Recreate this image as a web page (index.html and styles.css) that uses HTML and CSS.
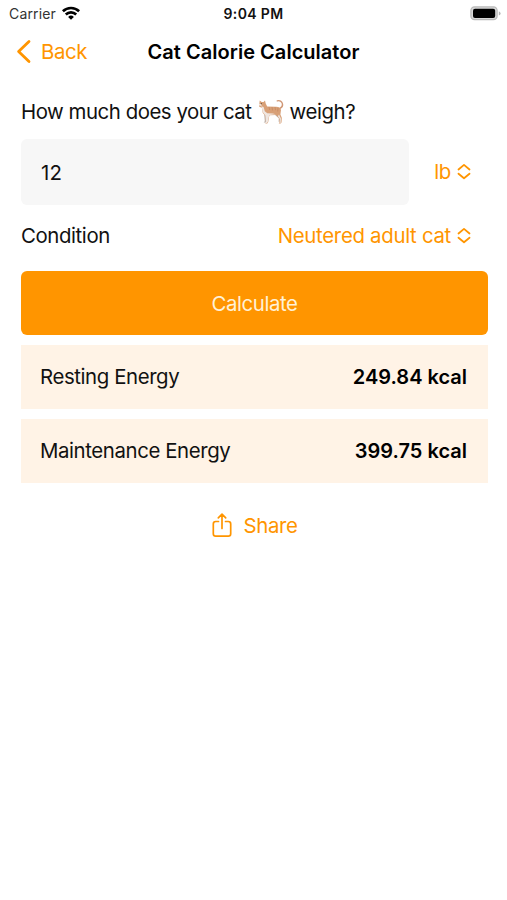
FILE: index.html
```html
<!DOCTYPE html>
<html lang="en">
<head>
<meta charset="utf-8">
<title>Cat Calorie Calculator</title>
<link rel="stylesheet" href="styles.css">
</head>
<body>
<div class="status">
  <div class="carrier"><span class="carrier-name">Carrier</span>
    <svg class="wifi" viewBox="0 0 18 14" width="18" height="14" fill="none" stroke="#000" stroke-width="2.6"><path d="M.9 5.3a11.6 11.6 0 0 1 16.2 0M3.8 8.5a7.4 7.4 0 0 1 10.4 0"/><path d="M9 13.8 6.1 11a4.2 4.2 0 0 1 5.8 0z" fill="#000" stroke="none"/></svg>
  </div>
  <span class="time">9:04 PM</span>
  <svg class="battery" viewBox="0 0 31 15" width="31" height="15"><rect x=".9" y=".9" width="26.2" height="12.8" rx="3.6" fill="#d8d8d8" stroke="#b9b9b9" stroke-width="1.3"/><rect x="3" y="2.7" width="22.2" height="9.2" rx="2" fill="#000"/><path d="M28.8 5.2q1.8.7 1.8 2.2t-1.8 2.2z" fill="#b5b5b5"/></svg>
</div>
<header class="nav">
  <a class="back"><svg viewBox="0 0 15 24" width="15" height="24" fill="none" stroke="currentColor" stroke-width="2.8" stroke-linecap="round" stroke-linejoin="round"><path d="M13 1.5 2.6 11.5 13 21.5"/></svg><span>Back</span></a>
  <h1>Cat Calorie Calculator</h1>
</header>
<main>
  <label class="question"><span class="ask">How much does your cat</span>
    <svg class="cat" viewBox="0 0 26 26" width="26" height="26"><path d="M22 9.3c1.6-.8 2.9-2 2.5-4.3C24 2.3 21.6 1 19.3 1.9" fill="none" stroke="#cf9674" stroke-width="1.4" stroke-linecap="round"/><path d="m6.2 15 .6 7.3-1.1 1.2h2.2l1.3-7zM19.5 15l3 3.5-.3 4.3h-1.6l.2-3.6-3.5-3z" fill="#b9afa9"/><path d="m1.7 1.5 2 1.4h1.8L7 1.6l.7 3 1.5 2.9 8 .2q5.3-.4 5.8 3.4l-.6 4.4 1.4 3.3-.3 4.6-.9 1.2h-1.8l.6-1.5-.2-3.6-3-3.4-6.8.1-1.2 6.9-1 1.5H7.4l.5-1.6-.5-6-2.7-3.3-.8-5-2.7-1 .1-2.2z" fill="#d8a077"/><path d="m3.3 7.2 2.3.7 1.2 4.3 2.5 2 5.5.4 3 .7-6.6.8-1.2 6.5-1 1.4H7.4l.5-1.6-.5-6-2.7-3.3-.9-4.7z" fill="#efe6e0"/><path d="m21 15.5 2 4-.3 4.5h-1.2l.3-4-2-2.7z" fill="#ece1d9"/><path d="m11 8 .7 3M14 8l.5 3.4M17 8l.5 3.2M20 9l-.3 3.5" stroke="#bf8259" stroke-width=".6" fill="none"/><path d="M1 6.3V5l1.5-.2 1.3 1.4-.6.8z" fill="#f1e7e0"/><circle cx="3.3" cy="4.6" r=".6" fill="#57483d"/></svg>
    <span class="weigh">weigh?</span></label>
  <div class="weight">
    <div class="field"><span>12</span></div>
    <div class="picker"><span class="unit">lb</span><svg class="updown" viewBox="0 0 14 16" width="14" height="16"><path d="m1.5 5.5 5.5-4.6 5.5 4.6M1.5 9.7l5.5 4.6 5.5-4.6"/></svg></div>
  </div>
  <div class="condition">
    <span class="cond-label">Condition</span>
    <div class="picker"><span class="cond-value">Neutered adult cat</span><svg class="updown" viewBox="0 0 14 16" width="14" height="16"><path d="m1.5 5.5 5.5-4.6 5.5 4.6M1.5 9.7l5.5 4.6 5.5-4.6"/></svg></div>
  </div>
  <button class="calculate"><span>Calculate</span></button>
  <div class="result"><span class="resting">Resting Energy</span><strong>249.84 kcal</strong></div>
  <div class="result"><span class="maintenance">Maintenance Energy</span><strong>399.75 kcal</strong></div>
  <a class="share"><svg viewBox="0 0 20 26" width="20" height="26" fill="none" stroke="currentColor" stroke-width="1.7" stroke-linecap="round" stroke-linejoin="round"><path d="M6.5 8.5H3.7Q1.3 8.5 1.3 10.9v9.8q0 2.4 2.4 2.4h12.6q2.4 0 2.4-2.4v-9.8q0-2.4-2.4-2.4h-2.8M10 15.5V1.3M6.3 4.8 10 1.1l3.7 3.7"/></svg><span>Share</span></a>
</main>
</body>
</html>
```
FILE: styles.css
```css
* { box-sizing: border-box; }
body {
  margin: 0;
  min-height: 900px;
  background: #fff;
  color: #111;
  font: 20.4px/26px Inter, "Liberation Sans", sans-serif;
  letter-spacing: -.4px;
  white-space: nowrap;
}
svg { display: block; flex: none; overflow: visible; }
.status {
  display: grid;
  grid-template-columns: 1fr auto 1fr;
  align-items: center;
  height: 27px;
  padding: 0 6px 0 9px;
  font-size: 14px;
  line-height: 18px;
  letter-spacing: 0;
}
.carrier { display: flex; align-items: center; gap: 6px; color: #333; }
.carrier-name { letter-spacing: .15px; }
.wifi { margin-top: -2px; }
.time { margin-right: 3px; color: #111; font-weight: 600; letter-spacing: .35px; }
.battery { justify-self: end; }
.nav {
  display: grid;
  grid-template-columns: 1fr auto 1fr;
  align-items: center;
  height: 50px;
  padding: 0 16px;
}
.back { display: flex; align-items: center; gap: 10px; color: #ff9500; }
h1 { margin: 0; font-size: 20px; line-height: 26px; font-weight: 600; letter-spacing: .03px; color: #000; }
main { padding: 22px 19px 0 21px; }
.question { display: flex; align-items: center; height: 26px; }
.ask { letter-spacing: -.46px; }
.cat { margin: 0 6px; }
.weight { display: flex; justify-content: space-between; align-items: center; margin-top: 14px; padding-right: 17px; }
.field {
  display: flex;
  align-items: center;
  width: 388px;
  height: 66px;
  padding: 1px 0 0 20px;
  border-radius: 6px;
  background: #f7f7f7;
  letter-spacing: .2px;
}
.picker { display: flex; align-items: center; gap: 6px; color: #ff9500; letter-spacing: -.3px; }
.updown { fill: none; stroke: currentColor; stroke-width: 1.8; stroke-linecap: round; stroke-linejoin: round; }
.condition { display: flex; justify-content: space-between; align-items: center; height: 62px; padding-right: 17px; }
.calculate {
  display: flex;
  align-items: center;
  justify-content: center;
  width: 467px;
  height: 64px;
  margin: 4px 0 0;
  padding-top: 2px;
  border: 0;
  border-radius: 6px;
  background: #ff9500;
  color: #fff1d6;
  font: inherit;
  letter-spacing: inherit;
}
.result {
  display: flex;
  justify-content: space-between;
  align-items: center;
  height: 64px;
  margin-top: 10px;
  padding: 0 21px 0 19px;
  background: #fff3e6;
}
strong { font-size: 20px; font-weight: 600; letter-spacing: 0; color: #000; }
.share { display: flex; align-items: center; justify-content: center; gap: 12px; height: 26px; margin-top: 30px; color: #ff9500; }
```
